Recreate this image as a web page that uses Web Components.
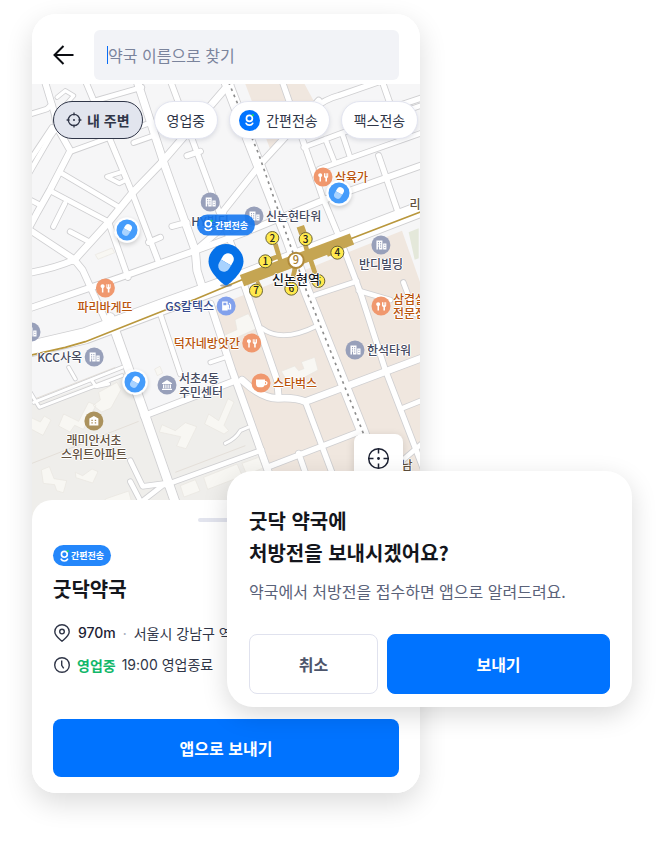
<!DOCTYPE html>
<html lang="ko">
<head>
<meta charset="utf-8">
<meta name="viewport" content="width=device-width, initial-scale=1">
<title>굿닥 약국 찾기</title>
<style>
    body{
        margin:0;
        background:#fff;
        color:#303648;
        font-family:"Noto Sans CJK KR","Noto Sans",sans-serif;
        font-size:14px;
    }
    .scene{
        display:grid;
        grid-template-columns:195fr 193fr 212fr;
        padding:14px 32px 51px;
    }
    phone-frame{
        grid-area:1 / 1 / 2 / 3;
    }
    confirm-dialog{
        grid-area:1 / 2 / 2 / 4;
        align-self:end;
        margin-bottom:86px;
    }
</style>
</head>
<body>
<main class="scene">
    <phone-frame>
        <search-header placeholder="약국 이름으로 찾기"></search-header>
        <street-map>
            <map-place kind="food" side="right" style="left:291px;top:93px">삭육가</map-place>
            <map-place kind="building" side="below" style="left:178px;top:118px">HY빌딩</map-place>
            <map-place kind="building" side="right" style="left:222px;top:132px">신논현타워</map-place>
            <map-place kind="building" side="below" style="left:349px;top:161px">반디빌딩</map-place>
            <map-place kind="food" side="below" style="left:73px;top:204px">파리바게뜨</map-place>
            <map-place kind="gas" side="left" style="left:194px;top:222px">GS칼텍스</map-place>
            <map-place kind="food" side="right" style="left:349px;top:222px">삼겹살<br>전문점</map-place>
            <map-place kind="building" side="left" style="left:-1px;top:248px"></map-place>
            <map-place kind="food" side="left" style="left:220px;top:259px">덕자네방앗간</map-place>
            <map-place kind="building" side="right" style="left:323px;top:266px">한석타워</map-place>
            <map-place kind="building" side="left" style="left:62px;top:273px">KCC사옥</map-place>
            <map-place kind="office" side="right" style="left:135px;top:301px">서초4동<br>주민센터</map-place>
            <map-place kind="cafe" side="right" style="left:229px;top:299px">스타벅스</map-place>
            <map-place kind="home" side="below" style="left:62px;top:337px">래미안서초<br>스위트아파트</map-place>
            <map-place kind="plain" style="left:383px;top:120px">리</map-place>
            <map-place kind="plain" style="left:375px;top:381px">남</map-place>
            <map-place kind="station" style="left:264px;top:195px">신논현역</map-place>
            <pharmacy-pin style="left:95px;top:146px"></pharmacy-pin>
            <pharmacy-pin style="left:307px;top:109px"></pharmacy-pin>
            <pharmacy-pin style="left:103px;top:298px"></pharmacy-pin>
            <pharmacy-pin selected style="left:194px;top:182px"></pharmacy-pin>
            <send-badge class="over" style="left:194px;top:141px">간편전송</send-badge>

            <filter-chip slot="filters" selected icon="target">내 주변</filter-chip>
            <filter-chip slot="filters">영업중</filter-chip>
            <filter-chip slot="filters" icon="logo">간편전송</filter-chip>
            <filter-chip slot="filters">팩스전송</filter-chip>
        </street-map>
        <pharmacy-sheet>
            <send-badge slot="badge">간편전송</send-badge>
            <span slot="name">굿닥약국</span>
            <span slot="distance">970m</span>
            <span slot="address">서울시 강남구 역삼동</span>
            <span slot="status">영업중</span>
            <span slot="hours">19:00 영업종료</span>
            <span slot="action">앱으로 보내기</span>
        </pharmacy-sheet>
    </phone-frame>
    <confirm-dialog>
        <span slot="title">굿닥 약국에<br>처방전을 보내시겠어요?</span>
        <span slot="text">약국에서 처방전을 접수하면 앱으로 알려드려요.</span>
        <span slot="cancel">취소</span>
        <span slot="confirm">보내기</span>
    </confirm-dialog>
</main>

<script>
const FONT='font-family:"Noto Sans CJK KR","Noto Sans",sans-serif;'

// the "g" mark, drawn in a 12x16 box
const LOGO=`
    <circle cx="5.800" cy="5.800" r="3.900" fill="none" stroke="#fff" stroke-width="2.200"/>
    <path d="M1.500 12.200c.8 1.700 2.300 2.500 4.300 2.500s3.500-.8 4.300-2.500" fill="none" stroke="#fff" stroke-width="2.200" stroke-linecap="round"/>
    <circle cx="10.300" cy="1.600" r="1.500" fill="#1fd660"/>`

class PhoneFrame extends HTMLElement{
    constructor(){
        super()
        this.attachShadow({mode:'open'})
        this.shadowRoot.innerHTML=`
            <style>
                :host{
                    display:block;
                    min-width:0;
                    border-radius:24px;
                    box-shadow:0 10px 28px rgba(0,0,0,.14);
                    background:#fff;
                }
                .screen{
                    display:flex;
                    flex-direction:column;
                    border-radius:24px;
                    overflow:hidden;
                }
            </style>
            <div class="screen"><slot></slot></div>
        `
    }
}

class SearchHeader extends HTMLElement{
    constructor(){
        super()
        this.attachShadow({mode:'open'})
    }
    connectedCallback(){
        const placeholder=this.getAttribute('placeholder')
        this.shadowRoot.innerHTML=`
            <style>
                :host{
                    display:flex;
                    align-items:center;
                    gap:20px;
                    padding:16px 21px 4px;
                    background:#fff;
                }
                button{
                    display:flex;
                    padding:0;
                    border:0;
                    background:none;
                }
                label{
                    display:flex;
                    flex:1;
                    align-items:center;
                    min-width:0;
                    height:50px;
                    padding:0 14px 0 13px;
                    box-sizing:border-box;
                    border-radius:6px;
                    background:#f2f3f7;
                }
                .caret{
                    width:1px;
                    height:18px;
                    background:#0a6cf5;
                }
                input{
                    flex:1;
                    min-width:0;
                    padding:0;
                    border:0;
                    outline:0;
                    background:none;
                    font-size:16px;
                    ${FONT}
                }
                input::placeholder{
                    color:#7b849c;
                    opacity:1;
                }
            </style>
            <button type="button" aria-label="뒤로">
                <svg width="21" height="22" viewBox="0 0 21 22" fill="none" stroke="#0b0d12" stroke-width="2">
                    <path d="M20.500 11H1.500M10.500 2L1.500 11L10.500 20"/>
                </svg>
            </button>
            <label>
                <span class="caret"></span>
                <input type="text" aria-label="${placeholder}" placeholder="${placeholder}">
            </label>
        `
    }
}

class FilterChip extends HTMLElement{
    constructor(){
        super()
        this.attachShadow({mode:'open'})
    }
    connectedCallback(){
        const icons={
            target:`<svg width="16" height="16" viewBox="0 0 16 16" fill="none" stroke="#303648" stroke-width="1.3">
                <circle cx="8" cy="8" r="5.700"/><circle cx="8" cy="8" r="1" fill="#303648" stroke="none"/>
                <path d="M8 .6v3M8 12.400v3M.6 8h3M12.400 8h3"/></svg>`,
            logo:`<svg width="21" height="21" viewBox="0 0 21 21">
                <circle cx="10.500" cy="10.500" r="10.500" fill="#0073ff"/>
                <g transform="translate(6 4) scale(.76)">${LOGO}</g></svg>`
        }
        this.shadowRoot.innerHTML=`
            <style>
                :host{
                    display:block;
                    flex:none;
                }
                button{
                    display:flex;
                    align-items:center;
                    gap:5px;
                    height:38px;
                    padding:0 12px;
                    border:1px solid #e3e5f0;
                    border-radius:19px;
                    background:#fff;
                    color:#303648;
                    font-size:14px;
                    box-shadow:0 2px 4px rgba(40,50,80,.12);
                    white-space:nowrap;
                    ${FONT}
                }
                :host([icon=logo]) button{
                    gap:6px;
                    padding:0 11px 0 9px;
                }
                :host([selected]) button{
                    border-color:#303648;
                    background:#e2e5ee;
                    font-weight:700;
                    box-shadow:none;
                }
            </style>
            <button type="button">${icons[this.getAttribute('icon')]||''}<slot></slot></button>
        `
    }
}

class SendBadge extends HTMLElement{
    constructor(){
        super()
        this.attachShadow({mode:'open'})
        this.shadowRoot.innerHTML=`
            <style>
                :host{
                    display:inline-flex;
                    align-items:center;
                    gap:2px;
                    height:21px;
                    padding:0 7px;
                    border-radius:11px;
                    background:#2487fb;
                    color:#fff;
                    font-size:9px;
                    font-weight:700;
                    line-height:21px;
                    white-space:nowrap;
                }
                :host(.over){
                    position:absolute;
                    transform:translate(-50%,-50%);
                    background:rgba(20,119,240,.9);
                }
            </style>
            <svg width="9" height="12" viewBox="0 0 12 16">${LOGO}</svg>
            <slot></slot>
        `
    }
}

class PharmacyPin extends HTMLElement{
    constructor(){
        super()
        this.attachShadow({mode:'open'})
    }
    connectedCallback(){
        const pill=`<g transform="rotate(30)">
                <path d="M-4.500 0v-3a4.500 4.500 0 0 1 9 0v3z" fill="#fff"/>
                <path d="M-4.500 0v3a4.500 4.500 0 0 0 9 0v-3z" fill="#a9d3ff"/>
            </g>`
        const shape=this.hasAttribute('selected')
            ?`<svg width="36" height="44" viewBox="-18 -19 36 44">
                <ellipse cx="0" cy="22.500" rx="6" ry="1.500" fill="#777" opacity=".6"/>
                <path d="M0 22.500C-2 22.500-17.500 9.500-17.500-1.500a17.500 17.500 0 0 1 35 0C17.500 9.500 2 22.500 0 22.500z" fill="#0571e8"/>
                <g transform="translate(0 -.5) scale(1.300)">${pill}</g></svg>`
            :`<svg width="26" height="26" viewBox="-13 -13 26 26">
                <circle r="12.500" fill="#fff"/><circle r="10.500" fill="#459cfb"/>
                <g transform="scale(.82)">${pill}</g></svg>`
        this.shadowRoot.innerHTML=`
            <style>
                :host{
                    position:absolute;
                    transform:translate(-50%,-50%);
                    line-height:0;
                }
                svg{
                    border-radius:50%;
                    box-shadow:0 2px 4px rgba(0,0,0,.16);
                }
                :host([selected]) svg{
                    border-radius:0;
                    box-shadow:none;
                }
            </style>
            ${shape}
        `
    }
}

class MapPlace extends HTMLElement{
    constructor(){
        super()
        this.attachShadow({mode:'open'})
    }
    connectedCallback(){
        const fork='<path d="M6.200 5.200c1.200 0 2 .9 2 2 0 .9-.5 1.500-1.200 1.800v4.500H5.500V9C4.700 8.700 4.200 8.100 4.200 7.200c0-1.100.8-2 2-2zM10 5.200h1v3h.6v-3h1v3h.6v-3h1v3.400c0 .8-.5 1.300-1.200 1.500v3.400h-1.600v-3.400c-.8-.2-1.400-.7-1.400-1.500z"/>'
        const building='<path fill-rule="evenodd" d="M4.500 4.500h6v9h-6zM6 6v1.200h1V6zm2.200 0v1.200h1V6zM6 8.300v1.200h1V8.300zm2.200 0v1.200h1V8.300zM6 10.600v3h1v-3zm2.200 0v1.200h1v-1.200zM11.200 7.500h3.300v6h-3.300zm1.200 1.200v1h1v-1zm0 2.200v1h1v-1z"/>'
        const kinds={
            food:['#f0986e','#b9540c',fork],
            cafe:['#f0986e','#b9540c','<path fill-rule="evenodd" d="M4 5.500h9V7c3.500-.4 3.500 4.500-.4 4.300-.6 1.300-1.300 2-2.400 2H6.800C5 13.300 4 11.500 4 9.500zM13 8v2.200c1.500 0 1.500-2.200 0-2.200z"/>'],
            building:['#98a0ba','#454a5f',building],
            office:['#98a0ba','#454a5f','<path d="M9 4l5 3.200v.8H4v-.8zM5 8.500h1.300v3.700H5zm2.300 0h1.200v3.700H7.300zm2.200 0h1.200v3.700H9.500zm2.200 0H13v3.700h-1.300zM4 12.700h10v1.200H4z"/>'],
            gas:['#82a1ec','#34488a','<path fill-rule="evenodd" d="M5 4.500h5.500v3.300h1.300v3.700h.9V7.800l-1.200-1.400.8-.7 1.700 2v4.800h-3.400V9.200h-.1v4.300H5zM6.200 5.700v2.500h3V5.700z"/>'],
            home:['#ab925d','#62513f','<path fill-rule="evenodd" d="M9 4l4.500 2.600v7h-9v-7zM6.500 7.800V9h1.400V7.800zm3.400 0V9h1.400V7.800zM6.500 10.300v1.200h1.400v-1.200zm3.400 0v1.200h1.400v-1.200z"/>'],
            plain:['','#62513f',''],
            station:['','#14161c','']
        }
        const [fill,ink,glyph]=kinds[this.getAttribute('kind')]
        const icon=glyph
            ?`<svg width="20" height="20" viewBox="-1 -1 20 20" fill="#fff"><circle cx="9" cy="9" r="9.500" fill="${fill}"/>${glyph}</svg>`
            :''
        this.shadowRoot.innerHTML=`
            <style>
                :host{
                    position:absolute;
                    display:flex;
                    align-items:center;
                    gap:2px;
                    transform:translate(-50%,-50%);
                    color:${ink};
                    font-size:12px;
                    font-weight:500;
                    line-height:14px;
                    white-space:nowrap;
                    text-shadow:1px 0 #fff,-1px 0 #fff,0 1px #fff,0 -1px #fff;
                }
                :host([side=right]){
                    transform:translate(-10px,-50%);
                }
                :host([side=left]){
                    flex-direction:row-reverse;
                    transform:translate(calc(10px - 100%),-50%);
                }
                :host([side=below]){
                    flex-direction:column;
                    transform:translate(-50%,-10px);
                    text-align:center;
                }
                :host([kind=station]){
                    font-size:13px;
                }
                svg{
                    flex:none;
                }
            </style>
            ${icon}<span><slot></slot></span>
        `
    }
}

// roads as [width, path], three units to a pixel
const ROADS=[
    [18,'M38 -10L68 90L75 130L115 200L54 318L15 387L-8 430'],
    [14,'M-10 270L55 158L75 130'],
    [14,'M-10 92L45 75L60 60M-10 235L60 130'],
    [10,'M75 40L100 20L125 35L90 75'],
    [14,'M89 268L259 368M59 323L229 413M-10 345L22 362'],
    [14,'M99 358L64 428M114 443L175 475'],
    [20,'M600 -10L540 60L385 240L300 328L225 420L125 530'],
    [18,'M-10 436L125 525L152 558L235 740'],
    [18,'M-10 567Q70 552 125 528'],
    [18,'M-10 674L260 582L490 500L640 445L870 350L1180 240'],
    [22,'M315 -10L400 250L490 500L495 560L514 620'],
    [16,'M160 -10L300 325L380 535M230 415L288 580'],
    [12,'M275 262L225 278L262 298L282 288'],
    [14,'M115 203L350 118M305 176L365 155M190 50L330 10'],
    [16,'M415 -10L560 380L610 510M465 215L505 202M420 427L465 415M350 475L385 460'],
    [18,'M860 50L690 235L575 380L560 440L490 500'],
    [16,'M750 -10L870 335L930 480L985 625L1060 858L1180 1170'],
    [14,'M815 190L930 147L1180 60M862 255L1180 143M880 165L908 235M930 147L955 222'],
    [16,'M845 75Q880 45 920 35L1050 -10M1050 -10L1085 90M1085 70L1180 38'],
    [16,'M1040 215L1105 405'],
    [14,'M850 633L975 592M980 620L1075 648M1114 595L1150 690'],
    [26,'M235 700L330 968L435 1270'],
    [14,'M385 690L445 870'],
    [18,'M335 996L610 890'],
    [20,'M535 660L600 858L715 1180'],
    [12,'M535 835L580 820'],
    [18,'M632 590L735 888L740 940'],
    [12,'M690 733Q750 778 855 725'],
    [20,'M630 888Q690 945 740 943Q790 940 820 953L1180 818'],
    [16,'M820 953L905 1180M710 1148L990 1040M800 1108L825 1180'],
    [14,'M400 1203L690 1098M295 1130L332 1207L400 1198L320 1260M295 1193L330 1260'],
    [9,'M-5 925L22 970L270 875M5 955L270 850M110 850L130 885M180 890L192 908L230 900'],
    [9,'M580 1078Q610 1065 625 1040L648 1030'],
    [14,'M1110 973L1180 945M1180 1070L1110 1130'],
    [46,'M-10 795L160 755L400 665L640 578L960 455L1180 370'],
    [32,'M575 -30L650 165L770 470L825 625L985 1025L1040 1170']
]

class StreetMap extends HTMLElement{
    constructor(){
        super()
        this.attachShadow({mode:'open'})
    }
    connectedCallback(){
        const casing=ROADS.map(([w,d])=>`<path d="${d}" stroke-width="${w+5}"/>`).join('')
        const surface=ROADS.map(([w,d])=>`<path d="${d}" stroke-width="${w}"/>`).join('')
        const exits=[[1,700,532],[2,721,462],[3,821,465],[4,916,506],[5,859,591],[6,778,614],[7,672,620]]
            .map(([n,x,y])=>`<circle cx="${x}" cy="${y}" r="19.500" fill="#ffe94d" stroke="#6b6436" stroke-width="3"/>
                <text x="${x}" y="${y+11}" font-size="30" fill="#222">${n}</text>`).join('')
        this.shadowRoot.innerHTML=`
            <style>
                :host{
                    position:relative;
                    display:block;
                    height:440px;
                    overflow:hidden;
                    background:#f6f6f7;
                }
                .roads{
                    display:block;
                    width:100%;
                    height:100%;
                }
                .roads text{
                    ${FONT}
                    font-weight:500;
                    text-anchor:middle;
                }
                .filters{
                    position:absolute;
                    top:17px;
                    left:21px;
                    display:flex;
                    gap:11px;
                }
                .locate{
                    position:absolute;
                    top:350px;
                    right:17px;
                    display:flex;
                    padding:13px;
                    border:0;
                    border-radius:8px;
                    background:#fff;
                    box-shadow:0 2px 8px rgba(0,0,0,.14);
                }
            </style>
            <svg class="roads" viewBox="0 0 1164 1320" preserveAspectRatio="xMidYMin slice" fill="none">
                <path fill="#f0e7df" d="M638 -5L720 210L850 60L815 -5zM545 670L960 500L1110 440L1180 640V1320H770z"/>
                <path fill="#efeeeb" d="M-5 965L290 860L335 996L610 890L770 1320H-5z"/>
                <path fill="#e4e8da" d="M1130 445l30 -12v90l-12 4z"/>
                <g stroke="#e4dfd9" stroke-width="3">
                    <path d="M-5 1140L320 1012M430 1165L640 1085M-5 950L250 850"/>
                </g>
                <g fill="#f8f7f3" stroke="#e9e6df" stroke-width="2">
                    <path d="M190 512l50 -20l8 14l-50 20zM368 855l16 -8l8 20l-16 8z"/>
                    <path d="M95 990l45 22l30 -58l22 10l-38 72l-26 -12l-14 20l-34 -18zM200 925l55 -30l12 22l-30 55l-28 12l-26 -20l22 -16z"/>
                    <path d="M-5 1000l30 14l12 -18l20 12l-24 46l-38 -20zM28 1158l24 -10l14 36l38 6l-10 36l-20 -6l-6 -18l-34 -4zM130 1165l22 10l28 -20l18 8l-16 34l-50 -16z"/>
                    <path d="M390 1022l40 18l30 -24l34 12l-32 66l-28 -8l12 -28l-64 -14zM530 990l30 20l28 -66l18 10l-30 70l14 16l-14 10l-58 -30z"/>
                    <path d="M445 1205l45 -18l14 34l-48 18zM515 1180l100 -40l16 36l-104 40zM630 1138l50 -18l14 32l-50 20zM220 1245l70 -24l8 30h-78z"/>
                    <path d="M575 755l40 -18l-6 -30l40 -18l26 44l-88 40zM748 862l40 -16l12 14l16 -6l-8 -20l40 -14l10 38l-56 30l-40 -2z"/>
                </g>
                <g stroke="#cfcfd1" stroke-linecap="round" stroke-linejoin="round">${casing}</g>
                <g stroke="#fff" stroke-linecap="round" stroke-linejoin="round">${surface}</g>
                <path stroke="#8d8d8d" stroke-width="5" stroke-dasharray="8 12" d="M590 -5L680 210L770 470L825 625L985 1025L1010 1090"/>
                <path stroke="#b9973c" stroke-width="5" d="M-5 814L100 790L160 773L400 678L490 646L630 587L960 463L1170 382"/>
                <g stroke="#c5a552">
                    <path stroke-width="36" d="M630 590L960 465"/>
                    <path stroke-width="14" d="M745 530L730 480M745 515L710 528M825 500L815 465M835 525L855 585M790 550L778 600M885 512L915 500"/>
                    <path stroke-width="24" d="M798 442L820 434M676 605L686 600"/>
                </g>
                ${exits}
                <circle cx="792" cy="529" r="23" fill="#fff" stroke="#b08a3a" stroke-width="6"/>
                <text x="792" y="541" font-size="33" fill="#a57c2c">9</text>
            </svg>
            <slot></slot>
            <div class="filters"><slot name="filters"></slot></div>
            <button class="locate" type="button" aria-label="현재 위치">
                <svg width="23" height="23" viewBox="0 0 23 23" fill="none" stroke="#1d2233" stroke-width="1.500">
                    <circle cx="11.500" cy="11.500" r="9.800"/>
                    <circle cx="11.500" cy="11.500" r="1.400" fill="#1d2233" stroke="none"/>
                    <path d="M11.500 1.500v5M11.500 16.500v5M1.500 11.500h5M16.500 11.500h5"/>
                </svg>
            </button>
        `
    }
}

class PharmacySheet extends HTMLElement{
    constructor(){
        super()
        this.attachShadow({mode:'open'})
        this.shadowRoot.innerHTML=`
            <style>
                :host{
                    position:relative;
                    display:flex;
                    flex-direction:column;
                    margin-top:-24px;
                    padding:18px 21px 16px;
                    border-radius:20px 20px 0 0;
                    background:#fff;
                }
                .handle{
                    align-self:center;
                    width:57px;
                    height:4px;
                    border-radius:2px;
                    background:#e2e4ee;
                }
                .badge{
                    display:flex;
                    margin-top:23px;
                }
                h2{
                    margin:8px 0 18px;
                    color:#14161c;
                    font-size:20px;
                    font-weight:700;
                    line-height:30px;
                }
                .row{
                    display:flex;
                    align-items:center;
                    gap:7px;
                    line-height:22px;
                    white-space:nowrap;
                }
                .row + .row{
                    gap:6px;
                    margin-top:10px;
                }
                .distance{
                    color:#1d2233;
                    font-family:Inter,"Noto Sans CJK KR",sans-serif;
                    font-weight:500;
                }
                .dot{
                    color:#a9afc0;
                }
                .status{
                    color:#12b76a;
                    font-weight:700;
                }
                .hours{
                    font-family:Inter,"Noto Sans CJK KR",sans-serif;
                }
                button{
                    height:58px;
                    margin-top:43px;
                    border:0;
                    border-radius:8px;
                    background:#0073ff;
                    color:#fff;
                    font-size:16px;
                    font-weight:700;
                    ${FONT}
                }
            </style>
            <div class="handle"></div>
            <div class="badge"><slot name="badge"></slot></div>
            <h2><slot name="name"></slot></h2>
            <div class="row">
                <svg width="18" height="18" viewBox="0 0 18 18" fill="none" stroke="#303648" stroke-width="1.400">
                    <path d="M9 17.200C6.500 15 1.800 11.800 1.800 7.700a7.200 7 0 0 1 14.400 0C16.200 11.800 11.500 15 9 17.200z"/>
                    <circle cx="9" cy="7.600" r="2.300"/>
                </svg>
                <span class="distance"><slot name="distance"></slot></span>
                <span class="dot">·</span>
                <slot name="address"></slot>
            </div>
            <div class="row">
                <svg width="18" height="18" viewBox="0 0 18 18" fill="none" stroke="#303648" stroke-width="1.400">
                    <circle cx="9" cy="9" r="7.300"/>
                    <path d="M8.700 4.500v4.800l2 3"/>
                </svg>
                <span class="status"><slot name="status"></slot></span>
                <span class="hours"><slot name="hours"></slot></span>
            </div>
            <button type="button"><slot name="action"></slot></button>
        `
    }
}

class ConfirmDialog extends HTMLElement{
    constructor(){
        super()
        this.attachShadow({mode:'open'})
        this.shadowRoot.innerHTML=`
            <style>
                :host{
                    position:relative;
                    display:block;
                    padding:34px 22px 13px;
                    border-radius:26px;
                    background:#fff;
                    box-shadow:0 8px 26px rgba(0,0,0,.15);
                }
                h1{
                    margin:0 0 10px;
                    color:#14161c;
                    font-size:20px;
                    font-weight:700;
                    line-height:32px;
                }
                p{
                    margin:0 0 31px;
                    color:#5a6279;
                    font-size:16px;
                    line-height:24px;
                }
                .actions{
                    display:grid;
                    grid-template-columns:129fr 223fr;
                    gap:9px;
                }
                button{
                    height:60px;
                    border:1px solid #0073ff;
                    border-radius:8px;
                    background:#0073ff;
                    color:#fff;
                    font-size:16px;
                    font-weight:700;
                    ${FONT}
                }
                .cancel{
                    border-color:#e0e2ee;
                    background:#fff;
                    color:#4d556b;
                }
            </style>
            <h1><slot name="title"></slot></h1>
            <p><slot name="text"></slot></p>
            <div class="actions">
                <button class="cancel" type="button"><slot name="cancel"></slot></button>
                <button type="button"><slot name="confirm"></slot></button>
            </div>
        `
    }
}

window.customElements.define('phone-frame',PhoneFrame)
window.customElements.define('search-header',SearchHeader)
window.customElements.define('filter-chip',FilterChip)
window.customElements.define('send-badge',SendBadge)
window.customElements.define('pharmacy-pin',PharmacyPin)
window.customElements.define('map-place',MapPlace)
window.customElements.define('street-map',StreetMap)
window.customElements.define('pharmacy-sheet',PharmacySheet)
window.customElements.define('confirm-dialog',ConfirmDialog)
</script>
</body>
</html>
